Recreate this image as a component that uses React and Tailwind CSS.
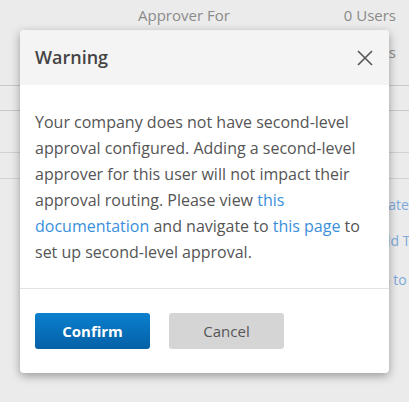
export default function App() {
  return (
    <div className="relative h-[402px] w-[409px] overflow-hidden bg-[#ebebeb] font-['Open_Sans',sans-serif] text-[14px] text-[#8a8a8a]">
      {/* dimmed page behind the dialog */}
      <div className="flex flex-col">
        <div className="flex h-[30px] items-center justify-between pl-[138px] pr-[13px] text-[15px]">
          <span>Approver For</span>
          <span>0 Users</span>
        </div>
        <div className="flex h-[44px] items-center justify-end pr-[13px] text-[15px]">
          <span>0 Users</span>
        </div>
        <div className="h-[12px] border-b border-[#c9c9c9]" />
        <div className="h-[25px] border-b border-[#c9c9c9]" />
        <div className="h-[42px] border-b border-[#d2d2d2]" />
        <div className="h-[26px] border-b border-[#d2d2d2]" />
        <div className="flex h-[36px] items-end whitespace-nowrap text-[#7ea9d9]">
          <span className="ml-[361px]">Update</span>
        </div>
        <div className="flex h-[36px] items-end whitespace-nowrap text-[#7ea9d9]">
          <span className="ml-[373px]">Add Team</span>
        </div>
        <div className="flex h-[39px] items-end whitespace-nowrap text-[#7ea9d9]">
          <span className="ml-[371px]">Go to</span>
        </div>
      </div>

      {/* dialog */}
      <div className="absolute left-[20px] top-[30px] w-[369px] overflow-hidden rounded-[4px] bg-white shadow-[0_3px_10px_rgba(0,0,0,0.35)]">
        <div className="flex h-[55px] items-center justify-between bg-[#f4f4f4] pl-[15px] pr-[16px]">
          <span className="text-[18px] font-semibold text-[#444]">Warning</span>
          <svg width="16" height="16" viewBox="0 0 16 16" className="text-[#555]">
            <path d="M1 1L15 15M15 1L1 15" stroke="currentColor" strokeWidth="1.6" fill="none" />
          </svg>
        </div>
        <div className="px-[15px] pb-[23px] pt-[24px] text-[16px] leading-[26px] text-[#555]">
          Your company does not have second-level approval configured. Adding a second-level approver for this user will
          not impact their approval routing. Please view <a className="text-[#3a8fdc]">this documentation</a> and
          navigate to <a className="text-[#3a8fdc]">this page</a> to set up second-level approval.
        </div>
        <div className="flex gap-[19px] border-t border-[#e2e2e2] px-[15px] pb-[24px] pt-[24px]">
          <button className="h-[36px] w-[115px] rounded-[3px] bg-gradient-to-b from-[#0b80cf] to-[#0560a6] text-[15px] font-bold text-white">
            Confirm
          </button>
          <button className="h-[36px] w-[115px] rounded-[3px] bg-[#d5d5d5] text-[15px] text-[#555]">Cancel</button>
        </div>
      </div>
    </div>
  )
}
